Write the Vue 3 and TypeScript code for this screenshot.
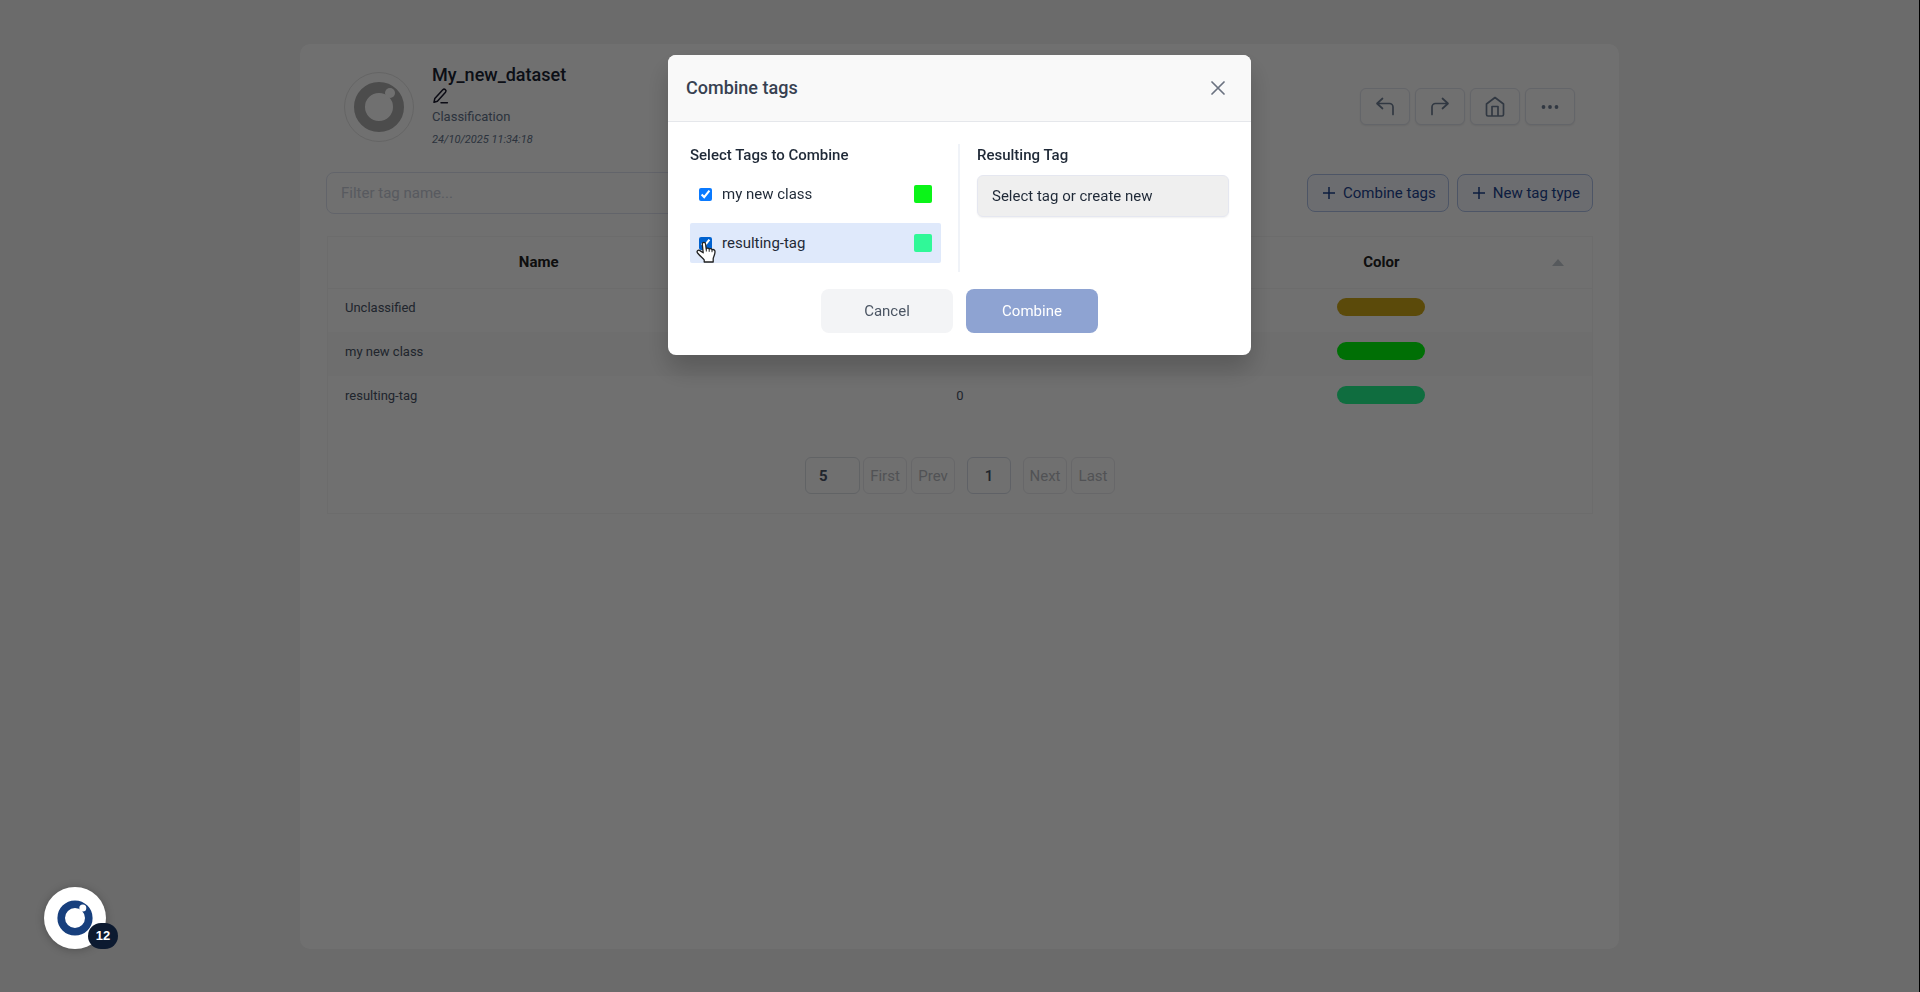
<script setup lang="ts">
import { ref } from 'vue'

interface Tag {
  name: string
  color: string
  selected: boolean
}

const tags = ref<Tag[]>([
  { name: 'my new class', color: '#0bf418', selected: true },
  { name: 'resulting-tag', color: '#30f898', selected: true },
])

const rows = [
  { name: 'Unclassified', color: '#d0a818', count: '' },
  { name: 'my new class', color: '#00fc0c', count: '' },
  { name: 'resulting-tag', color: '#24f890', count: '0' },
]

const filter = ref('')
const page = ref('1')
</script>

<template>
  <div class="app">
    <main class="panel">
      <header class="head">
        <div class="avatar">
          <svg width="50" height="50" viewBox="0 0 50 50" aria-hidden="true">
            <circle cx="25" cy="25" r="19.5" fill="none" stroke="#adadad" stroke-width="11" />
            <circle cx="36" cy="11" r="5" fill="#ffffff" />
          </svg>
        </div>
        <div class="info">
          <h1>My_new_dataset</h1>
          <button class="edit" type="button" aria-label="Edit name">
            <svg width="17" height="18" viewBox="0 0 17 18" fill="none" stroke="currentColor" stroke-width="1.5" stroke-linecap="round" stroke-linejoin="round">
              <path d="M2 15.2 2.8 11.6 10.8 2.8a1.8 1.8 0 0 1 2.7 2.4L5.4 14.2 2 15.2ZM9 15.8h6.4" />
            </svg>
          </button>
          <p class="kind">Classification</p>
          <p class="date">24/10/2025 11:34:18</p>
        </div>
        <nav class="tools">
          <button type="button" aria-label="Undo">
            <svg width="24" height="24" viewBox="0 0 24 24"><path d="M9.5 13.5 4 8.5 9.5 3.5M4 8.500h12.500a3.500 3.500 0 0 1 3.500 3.500v7.500" /></svg>
          </button>
          <button type="button" aria-label="Redo">
            <svg width="24" height="24" viewBox="0 0 24 24"><path d="M14.500 13.500 20 8.500 14.500 3.500M20 8.500H7.500A3.500 3.500 0 0 0 4 12v7.500" /></svg>
          </button>
          <button type="button" aria-label="Home">
            <svg width="24" height="24" viewBox="0 0 24 24"><path d="M3.500 9 12 2.500 20.500 9v10.500a1.500 1.500 0 0 1-1.500 1.500H5a1.500 1.500 0 0 1-1.500-1.500ZM9 21v-9.500h6V21" /></svg>
          </button>
          <button type="button" aria-label="More">
            <svg class="dots" width="24" height="24" viewBox="0 0 24 24"><circle cx="5.500" cy="12" r="1.900" /><circle cx="12" cy="12" r="1.900" /><circle cx="18.500" cy="12" r="1.900" /></svg>
          </button>
        </nav>
      </header>

      <div class="actions">
        <input v-model="filter" class="filter" type="text" placeholder="Filter tag name..." aria-label="Filter tag name" />
        <div class="buttons">
          <button type="button">
            <svg width="14" height="14" viewBox="0 0 14 14"><path d="M7 1v12M1 7h12" /></svg>
            Combine tags
          </button>
          <button type="button">
            <svg width="14" height="14" viewBox="0 0 14 14"><path d="M7 1v12M1 7h12" /></svg>
            New tag type
          </button>
        </div>
      </div>

      <section class="grid">
        <table>
          <thead>
            <tr>
              <th scope="col">Name</th>
              <td></td>
              <th scope="col">
                <span class="sorted">Color<svg class="arrow" width="12" height="7" viewBox="0 0 12 7"><path d="M6 0 12 7H0Z" /></svg></span>
              </th>
            </tr>
          </thead>
          <tbody>
            <tr v-for="row in rows" :key="row.name">
              <td class="name">{{ row.name }}</td>
              <td>{{ row.count }}</td>
              <td><span class="pill" :style="{ background: row.color }"></span></td>
            </tr>
          </tbody>
        </table>
        <div class="pager">
          <select aria-label="Rows per page"><option>5</option></select>
          <div class="group">
            <button type="button" disabled>First</button>
            <button type="button" disabled>Prev</button>
          </div>
          <input v-model="page" type="text" aria-label="Page" />
          <div class="group">
            <button type="button" disabled>Next</button>
            <button type="button" disabled>Last</button>
          </div>
        </div>
      </section>
    </main>

    <div class="overlay">
      <div class="dialog" role="dialog" aria-labelledby="dialog-title">
        <header class="dialog-head">
          <h2 id="dialog-title">Combine tags</h2>
          <button type="button" aria-label="Close">
            <svg width="14" height="14" viewBox="0 0 14 14"><path d="M1 1 13 13M13 1 1 13" /></svg>
          </button>
        </header>
        <div class="columns">
          <section class="sources">
            <h3>Select Tags to Combine</h3>
            <label v-for="(tag, i) in tags" :key="tag.name" class="tag" :class="{ hover: i === 1 }">
              <input v-model="tag.selected" type="checkbox" />
              <span class="label">{{ tag.name }}</span>
              <span class="swatch" :style="{ background: tag.color }"></span>
              <svg v-if="i === 1" class="cursor" width="21" height="23" viewBox="0 0 21 23" aria-hidden="true">
                <path d="M6.300 3.200c0-2.400 3.100-2.400 3.300 0l.6 4.700c.8-1.300 2.700-1 3 .3.900-1 2.600-.6 2.800.7 1.400-1 3.200.2 3 2.200-.1 3.200-1.500 4.400-1.800 6.500V21H8.200v-2.100C6.500 16.800 4.200 15.300 1.600 12c-1.400-1.900.5-3.500 2.300-2.400l3.300 2.200Z" fill="#fff" stroke="#222" stroke-width="1.300" stroke-linejoin="round" />
                <path d="M10.300 8v2.500M13.200 8.500v2.300M16 9.200v2" stroke="#222" stroke-width="1" />
              </svg>
            </label>
          </section>
          <section class="result">
            <h3 id="result-title">Resulting Tag</h3>
            <select aria-labelledby="result-title"><option>Select tag or create new</option></select>
          </section>
        </div>
        <footer class="dialog-foot">
          <button class="cancel" type="button">Cancel</button>
          <button class="combine" type="button">Combine</button>
        </footer>
      </div>
    </div>

    <button class="launcher" type="button" aria-label="Open help, 12 items">
      <svg width="36" height="36" viewBox="0 0 36 36" aria-hidden="true">
        <circle cx="18" cy="18" r="13.800" fill="none" stroke="#173f7d" stroke-width="7.600" />
        <circle cx="25.800" cy="8" r="3.500" fill="#ffffff" />
      </svg>
      <span class="badge">12</span>
    </button>
  </div>
</template>

<style>
body {
  background: #f3f3f3;
}
</style>

<style scoped>
* {
  box-sizing: border-box;
}
.app {
  display: flex;
  min-height: 100vh;
  padding: 44px 300px 43px;
  border-right: 1px solid #000;
  background: #f3f3f3;
  font-family: Roboto, "Liberation Sans", sans-serif;
  font-size: 15px;
  color: #1f2937;
}
button,
input,
select {
  margin: 0;
  font: inherit;
}
h1,
h2,
h3,
p {
  margin: 0;
}
.panel {
  flex: 1;
  padding: 18px 26px;
  border-radius: 10px;
  background: #fff;
}
.head {
  display: flex;
  align-items: flex-start;
  height: 92px;
  padding: 0 18px;
}
.avatar {
  display: flex;
  align-items: center;
  justify-content: center;
  width: 70px;
  height: 70px;
  margin-top: 10px;
  border: 1px solid #e5e5e5;
  border-radius: 50%;
}
.info {
  margin-left: 18px;
}
h1 {
  font-size: 18px;
  font-weight: 500;
  line-height: 25px;
  color: #1a2433;
}
.edit {
  display: block;
  height: 20px;
  padding: 0;
  border: 0;
  background: none;
  color: #1a1a2e;
}
.kind {
  font-size: 13px;
  line-height: 20px;
  color: #64748b;
}
.date {
  margin-top: 4px;
  font-size: 11px;
  font-style: italic;
  line-height: 18px;
  color: #64748b;
}
.tools {
  display: flex;
  gap: 5px;
  margin: 26px 0 0 auto;
}
.tools button {
  display: flex;
  align-items: center;
  justify-content: center;
  width: 50px;
  height: 37px;
  padding: 0;
  border: 1px solid #e2e5ee;
  border-radius: 6px;
  background: #fff;
  box-shadow: 0 1px 2px rgba(0, 0, 0, 0.08);
  color: #718096;
}
.tools svg {
  fill: none;
  stroke: currentColor;
  stroke-width: 1.7;
  stroke-linecap: round;
  stroke-linejoin: round;
}
.tools .dots {
  fill: currentColor;
  stroke: none;
}
.actions {
  display: flex;
  align-items: center;
  justify-content: space-between;
  margin-top: 18px;
}
.filter {
  width: 500px;
  height: 42px;
  padding: 0 14px;
  border: 1px solid #e0e4f2;
  border-radius: 8px;
  background: #fff;
}
.filter::placeholder {
  color: #c8cdd9;
}
.buttons {
  display: flex;
  gap: 8px;
}
.buttons button {
  display: flex;
  align-items: center;
  gap: 7px;
  height: 38px;
  padding: 0 12px 0 14px;
  border: 1px solid #b0c2e8;
  border-radius: 8px;
  background: #f5f8fe;
  color: #1e4491;
}
.buttons path {
  stroke: currentColor;
  stroke-width: 1.5;
}
.grid {
  margin: 22px 0 0 1px;
  border: 1px solid #f6f6f6;
}
table {
  width: 100%;
  border-collapse: collapse;
  table-layout: fixed;
}
th {
  height: 51px;
  padding: 0;
  border-bottom: 1px solid #f5f5f5;
  font-weight: 700;
  color: #222;
}
thead td {
  border-bottom: 1px solid #f5f5f5;
}
.sorted {
  display: block;
  position: relative;
}
.arrow {
  position: absolute;
  top: 6px;
  right: 28px;
  fill: #c3cad2;
}
tbody td {
  height: 44px;
  padding: 0 17px 6px;
  font-size: 13px;
  text-align: center;
  color: #4a5568;
}
tbody .name {
  text-align: left;
}
tbody tr:nth-child(even) {
  background: #fafafa;
}
.pill {
  display: block;
  width: 88px;
  height: 18px;
  margin: 0 auto;
  border-radius: 9px;
}
.pager {
  display: flex;
  justify-content: center;
  gap: 12px;
  padding: 37px 0 19px;
}
.group {
  display: flex;
  gap: 4px;
}
.pager button,
.pager input,
.pager select {
  width: 44px;
  height: 37px;
  padding: 0;
  border: 1px solid #ebebef;
  border-radius: 6px;
  background: #fff;
  text-align: center;
  color: #4a5568;
}
.pager button {
  color: #b9bcc2;
}
.pager select {
  width: 55px;
  margin-right: -9px;
  padding-left: 13px;
  border-color: #dde1e7;
  appearance: none;
  font-weight: 700;
  text-align: left;
}
.pager input {
  border-color: #d8dee8;
  font-weight: 500;
}
.overlay {
  position: fixed;
  inset: 0 1px 0 0;
  display: flex;
  align-items: flex-start;
  justify-content: center;
  padding-top: 55px;
  background: rgba(0, 0, 0, 0.56);
}
.dialog {
  width: 583px;
  border-radius: 8px;
  background: #fff;
  box-shadow: 0 14px 26px rgba(0, 0, 0, 0.2);
}
.dialog-head {
  display: flex;
  align-items: center;
  justify-content: space-between;
  height: 67px;
  padding: 0 26px 0 18px;
  border-bottom: 1px solid #e5e7eb;
  border-radius: 8px 8px 0 0;
  background: #f9f9f9;
}
h2 {
  padding-bottom: 2px;
  font-size: 18px;
  font-weight: 500;
  color: #374151;
}
.dialog-head button {
  display: flex;
  padding: 0;
  border: 0;
  background: none;
}
.dialog-head path {
  stroke: #6b7280;
  stroke-width: 1.7;
  stroke-linecap: round;
}
.columns {
  display: flex;
  margin: 22px 22px 0;
}
.sources {
  flex: 0 0 268px;
  padding: 0 17px 9px 0;
}
.result {
  flex: 1;
  padding-left: 17px;
  border-left: 2px solid #f0f3f8;
}
h3 {
  padding-top: 1px;
  font-size: 15px;
  font-weight: 500;
  line-height: 20px;
  color: #1f2937;
}
.tag {
  position: relative;
  display: flex;
  align-items: center;
  height: 40px;
  margin-top: 9px;
  padding: 0 9px;
  border-radius: 2px;
}
.tag.hover {
  background: #dfe9fb;
}
.tag input {
  width: 13px;
  height: 13px;
  accent-color: #0a7aff;
}
.hover input {
  accent-color: #0061cf;
}
.label {
  margin-left: 10px;
}
.swatch {
  width: 18px;
  height: 18px;
  margin-left: auto;
  border-radius: 2px;
}
.cursor {
  position: absolute;
  top: 18px;
  left: 6px;
}
.result select {
  width: 100%;
  height: 42px;
  margin-top: 10px;
  padding: 0 14px;
  border: 1px solid #e5e7f0;
  border-radius: 6px;
  appearance: none;
  background: #efefef;
  box-shadow: 0 1px 2px rgba(0, 0, 0, 0.06);
  color: #1f2937;
}
.dialog-foot {
  display: flex;
  justify-content: center;
  gap: 13px;
  padding: 17px 0 22px;
}
.dialog-foot button {
  width: 132px;
  height: 44px;
  padding: 0;
  border: 0;
  border-radius: 8px;
}
.cancel {
  background: #f3f4f6;
  color: #4b5563;
}
.combine {
  background: #8ea3d2;
  color: #fff;
}
.launcher {
  position: fixed;
  bottom: 43px;
  left: 44px;
  display: flex;
  align-items: center;
  justify-content: center;
  width: 62px;
  height: 62px;
  padding: 0;
  border: 0;
  border-radius: 50%;
  background: #fff;
  box-shadow: 0 1px 8px rgba(0, 0, 0, 0.25);
}
.badge {
  position: absolute;
  right: -12px;
  bottom: 0;
  width: 30px;
  height: 26px;
  border-radius: 13px;
  background: #0c1a30;
  color: #fff;
  font: bold 13px/26px "Liberation Sans", sans-serif;
  text-align: center;
}
</style>
